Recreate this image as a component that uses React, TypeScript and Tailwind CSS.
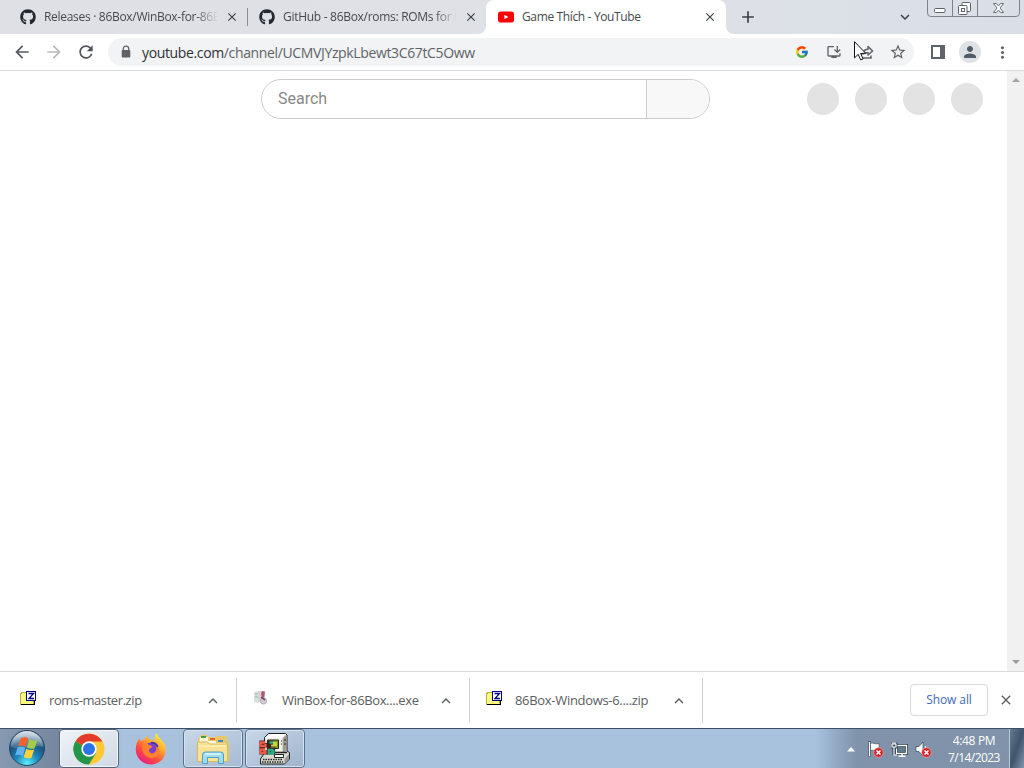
import React from 'react';
import { FaGithub } from 'react-icons/fa';
import { FcGoogle } from 'react-icons/fc';
import {
  MdAdd,
  MdArrowBack,
  MdArrowForward,
  MdClose,
  MdExpandLess,
  MdExpandMore,
  MdInstallDesktop,
  MdMoreVert,
  MdPerson,
  MdRefresh,
  MdStarBorder,
} from 'react-icons/md';

const YouTubeIcon = () => (
  <svg width="16" height="16" viewBox="0 0 16 16">
    <rect y="2.5" width="16" height="11" rx="2.8" fill="#f00" />
    <path d="M6.4 5.700v4.600l4-2.300z" fill="#fff" />
  </svg>
);

const LockIcon = () => (
  <svg width="14" height="14" viewBox="0 0 14 14">
    <path d="M4.300 6V3.800a2.700 2.700 0 015.400 0V6" fill="none" stroke="#5f6368" strokeWidth="1.300" />
    <rect x="2.700" y="5" width="8.600" height="7.500" rx="1" fill="#5f6368" />
  </svg>
);

const ShareIcon = () => (
  <svg width="16" height="16" viewBox="0 0 16 16" fill="none" stroke="#5f6368" strokeWidth="1.5">
    <path d="M3 6.500v7.500h10v-2.500" />
    <path d="M5 10c.5-3 2-4.700 5-4.700V2.600L14.600 7 10 11V8.400C7.800 8.400 6.300 8.800 5 10z" strokeLinejoin="round" />
  </svg>
);

const Cursor = () => (
  <svg className="absolute left-[854px] top-[41px]" width="13" height="20" viewBox="0 0 13 20">
    <path d="M.5.7v16.200l3.700-3.600 2.500 5.600 2.400-1-2.500-5.500h5.200z" fill="#fff" stroke="#111" />
  </svg>
);

const ZipIcon = () => (
  <svg width="17" height="16" viewBox="0 0 17 16" shapeRendering="crispEdges">
    <path d="M.5 4l2-2h4v1h7v11H.5z" fill="#f8f884" stroke="#b4b43c" />
    <path d="M1 14.500h14M14.500 11v4" stroke="#000" />
    <rect x="6.500" y="1.500" width="9" height="9" fill="#fff" stroke="#000080" />
    <path d="M8.500 3.500h5L9 8.500h5" fill="none" stroke="#000080" strokeWidth="1.300" shapeRendering="auto" />
  </svg>
);

const SetupIcon = () => (
  <svg width="16" height="16" viewBox="0 0 16 16">
    <path d="M1 2l5-1v12l-5-1z" fill="#d5e2dd" />
    <path d="M5 1h7v11H5z" fill="#d2d3d8" />
    <path d="M2 4h3M2 7h3" stroke="#9fb5ae" />
    <path d="M9 1l3 1-1 6-2-1-1-3z" fill="#b5546b" />
    <circle cx="10.500" cy="11" r="3.200" fill="#d4c8d3" stroke="#a0a0ab" strokeWidth=".6" />
    <path d="M8 7l4 3" stroke="#6d3546" strokeWidth="1.500" />
  </svg>
);

const StartOrb = () => (
  <svg width="38" height="38" viewBox="0 0 38 38">
    <defs>
      <radialGradient id="orb" cx=".5" cy=".95" r=".85">
        <stop offset="0" stopColor="#5ff0ff" />
        <stop offset=".4" stopColor="#1b86b8" />
        <stop offset=".75" stopColor="#1c4f7c" />
        <stop offset="1" stopColor="#7796b0" />
      </radialGradient>
      <linearGradient id="gloss" x2="0" y2="1">
        <stop stopColor="#fff" stopOpacity=".7" />
        <stop offset="1" stopColor="#fff" stopOpacity=".12" />
      </linearGradient>
    </defs>
    <circle cx="19" cy="19" r="17.500" fill="url(#orb)" stroke="#294560" />
    <path d="M3 18a16 16 0 0132 0c-9-3-22 4-32 0z" fill="url(#gloss)" />
    <g transform="rotate(5 19 19)">
      <path d="M12 9.500c3-1.500 5.500-1.300 7.500 0l-1.900 8.500c-2.300-1.300-5-1.200-7.500 0z" fill="#f0632c" />
      <path d="M20.700 10c2.500 1.300 5.300 1.200 8 0l-2 8.600c-2.500 1.200-5.300 1.200-7.900 0z" fill="#a3cc48" />
      <path d="M9.700 19.200c2.700-1.300 5.400-1.200 7.600 0l-1.900 8.300c-2.400-1.300-5-1.300-7.600 0z" fill="#62b1ee" />
      <path d="M18.400 19.800c2.500 1.300 5.300 1.200 7.900 0l-2 8.400c-2.400 1.200-5.200 1.200-7.800 0z" fill="#ffd13d" />
    </g>
  </svg>
);

const ChromeIcon = () => (
  <svg width="32" height="32" viewBox="0 0 32 32">
    <circle cx="16" cy="16" r="15.500" fill="#fcc934" />
    <path d="M16 16L2.600 8.200A15.500 15.500 0 0016 31.500l7-11.500z" fill="#23964b" />
    <path d="M16 16L2.600 8.200A15.500 15.500 0 0129.400 8.500H16z" fill="#e33b2e" />
    <path d="M2.600 8.200l6.900 11.900L16 23l-3 8.200A15.500 15.500 0 012.600 8.200z" fill="#23964b" />
    <circle cx="16" cy="16" r="7.700" fill="#fff" />
    <circle cx="16" cy="16" r="6" fill="#2c75e8" />
  </svg>
);

const FirefoxIcon = () => (
  <svg width="32" height="32" viewBox="0 0 32 32">
    <defs>
      <linearGradient id="fox" x1=".85" y1=".05" x2=".2" y2="1">
        <stop stopColor="#fff04a" />
        <stop offset=".35" stopColor="#ffa52b" />
        <stop offset=".65" stopColor="#ff4b3e" />
        <stop offset="1" stopColor="#e5148c" />
      </linearGradient>
    </defs>
    <path d="M4.500 5c.2 1.500.8 2.700 1.400 3.400C7 7 8.600 6.400 9.700 6.500c.3-1.600 1.500-3 2.800-3.500.1 2 1.400 3.300 3.800 4 1.500.2 2.500.4 3.500 1-.6-3 .1-5.800 2-7.500 1.200 3.800 4.400 5.200 6.200 8.500 1.300 1 1.800 2.200 2.300 4C32.500 23 25.500 31.500 16 31.500S.5 24 .8 16C1 11.500 2 8 4.500 5z" fill="url(#fox)" />
    <circle cx="16" cy="16.800" r="7.300" fill="#7542cf" />
    <path d="M8 11c3-1 5-.3 6.200 1.300l3.300.7c-.5 2-3 2.200-3.500 3.800-.5 2.500 2.500 4.200 5 3 2.400-1.200 3.300-4.500 1-7 4 1.500 5.300 5.200 3.800 8.200-2 4-7.300 5.300-11.300 3C8 21.500 6 16 8 11z" fill="#ff8130" />
    <path d="M16 10c3-1 6 1 6.500 4" fill="none" stroke="#4e36a5" strokeWidth="2" />
  </svg>
);

const ExplorerIcon = () => (
  <svg width="34" height="32" viewBox="0 0 34 32">
    <path d="M3 5l2-3h6l1 2h8l1-1h10v5l2 2v18H2V5z" fill="#e8c866" />
    <path d="M4 4h8v4h8v2h10v3H3z" fill="#fff8d9" />
    <path d="M5 3h5v2H5z" fill="#3d9d48" />
    <path d="M14 5h5v2h-5z" fill="#e0603a" />
    <path d="M22 7h5v2h-5z" fill="#4386c5" />
    <path d="M1.500 9h10l2 2h18v17.500h-30z" fill="#f8e394" stroke="#d8b85d" />
    <path d="M3 13h27" stroke="#fff7cd" />
    <path d="M6.500 30.500V22q0-3 3-3h15q3 0 3 3v8.500h-5v-6h-11v6z" fill="#9edcf0" stroke="#4e9fca" />
    <path d="M9 21h16" stroke="#e2faff" strokeWidth="1.500" />
  </svg>
);

const EightySixBoxIcon = () => (
  <svg width="32" height="32" viewBox="0 0 32 32">
    <path d="M5.500 4.500l4-4h17l1.500 1.500v16l2.500 1.500v6.500l-5 5h-24v-5l4-6z" fill="#d9d9cf" stroke="#202020" />
    <path d="M6 5L10 1h17l-3.500 4z" fill="#fff" />
    <path d="M23.500 5L27.500 2v16l-4 2z" fill="#9d9d94" />
    <path d="M6 5h17.500v13.500H6z" fill="#efefe6" />
    <path d="M8.500 7h11v8.500h-11z" fill="#86962a" stroke="#222" />
    <path d="M12 9h6v4h-6z" fill="#c8d23c" />
    <path d="M22 8h1M22 11h1M25 7h2M25 11h2" stroke="#222" />
    <path d="M5 19.500h23" stroke="#222" strokeWidth="1.500" />
    <path d="M25.500 26l4.500-5v5l-4.500 4.500z" fill="#999" />
    <path d="M15.500 21.500h9v3h-9z" fill="#fff" stroke="#222" />
    <path d="M4 26.500h20M3 29h21" stroke="#222" strokeWidth="1.500" strokeDasharray="1.500 1" />
    <g fill="none" stroke="#3a2222" strokeWidth="4.200">
      <path d="M6 9.500H2.500v3H6V10M6 16.500H2.500v3H6V17" />
      <path d="M14 9.500h-4v10h4v-3h-3" />
    </g>
    <g fill="none" strokeWidth="2.300" strokeLinejoin="round">
      <path d="M6.500 9.500H1.500v3.500h5V11M6.500 16.500H1.500V20h5v-2H4" stroke="#ee5a45" />
      <path d="M14 9.500h-3.500M14.500 17H9.700v3.500h4.800V18H12" stroke="#27ae88" />
    </g>
  </svg>
);

const ErrorBadge = () => (
  <g>
    <circle cx="11.500" cy="11.500" r="4.800" fill="#d2232c" stroke="#f2aaa6" strokeWidth=".7" />
    <path d="M9.500 9.500l4 4m0-4l-4 4" stroke="#fff" strokeWidth="1.500" />
  </g>
);

const FlagIcon = () => (
  <svg width="17" height="17" viewBox="0 0 17 17">
    <path d="M2.500 1v15" stroke="#fff" strokeWidth="1.800" />
    <path d="M1.500.5h2v15h-2z" fill="none" stroke="#273849" strokeWidth=".6" />
    <path d="M3.500 2.500c3-1.500 4 1.500 8.500 0v7c-4 1.500-5-1.200-8.500 0z" fill="#fff" stroke="#34465a" strokeWidth=".6" />
    <ErrorBadge />
  </svg>
);

const NetworkIcon = () => (
  <svg width="17" height="17" viewBox="0 0 17 17" fill="none">
    <path d="M5.500 4.500h10v8h-10z" fill="#63798e" stroke="#26384a" strokeWidth="3" />
    <path d="M5.500 4.500h10v8h-10zM7.500 15.200h7M11 12v3" stroke="#fff" strokeWidth="1.400" />
    <path d="M1 2v4h4V2M3 6v8M2 1v2m2-2v2" stroke="#26384a" strokeWidth="3" />
    <path d="M1 3v3h4V3zM3 6v8h3M2 1v2m2-2v2" stroke="#fff" strokeWidth="1.200" />
  </svg>
);

const VolumeIcon = () => (
  <svg width="17" height="17" viewBox="0 0 17 17">
    <path d="M1 5.500h3l4-4.500v14l-4-4.500H1z" fill="#fff" stroke="#34465a" strokeWidth=".7" />
    <path d="M10 5q2 2 1 5" fill="none" stroke="#fff" />
    <ErrorBadge />
  </svg>
);

const WindowButtons = () => (
  <div className="absolute right-[3px] top-0">
    <svg width="94" height="18" viewBox="0 0 94 18" fill="none" stroke="#7d838c">
      <path d="M.5 0v13q0 3.500 3.500 3.500h85q3.500 0 3.500-3.500V0M25.500 0v16M50.500 0v16" />
      <rect x="7.500" y="8.500" width="10.500" height="4" rx="1" fill="#fff" stroke="#5c616b" />
      <g fill="#fff" stroke="#5c616b">
        <rect x="35" y="2.500" width="8.500" height="9" rx="1" />
        <rect x="31.500" y="5.500" width="8.500" height="9" rx="1" />
        <rect x="34.500" y="8.500" width="3" height="3" />
      </g>
      <path d="M66.500 3.500h3l2 2.500 2-2.500h3l-3.500 4.500 3.500 4.500h-3l-2-2.500-2 2.500h-3L70 8z" fill="#fff" stroke="#5c616b" strokeWidth=".9" />
    </svg>
  </div>
);

const TabClose = () => <MdClose className="shrink-0 text-[#3c4043]" size={14} />;

const downloads = [
  { name: 'roms-master.zip', icon: <ZipIcon />, width: 'w-[237px]', text: 'tracking-[-0.42px]' },
  { name: 'WinBox-for-86Box....exe', icon: <SetupIcon />, width: 'w-[233px]', text: 'tracking-[-0.37px]' },
  { name: '86Box-Windows-6....zip', icon: <ZipIcon />, width: 'w-[233px]', text: 'tracking-[-0.31px]' },
];

const TabStrip = () => (
  <div className="relative flex h-[34px] items-stretch bg-linear-to-r from-[#dfe0e6] via-[#dee1e6] to-[#dadfe7] text-[12px] text-[#45494d]">
    <div className="flex w-[247px] items-center pl-5 pr-2">
      <FaGithub className="shrink-0 text-[#24292f]" size={16} />
      <span className="ml-2 w-[174px] overflow-hidden whitespace-nowrap tracking-[-0.3px] [mask-image:linear-gradient(to_right,black_87%,transparent)]">
        Releases · 86Box/WinBox-for-86B
      </span>
      <span className="ml-[7px]"><TabClose /></span>
    </div>
    <div className="my-auto h-[18px] w-px bg-[#8b8f95]" />
    <div className="flex w-[238px] items-center pl-[11px]">
      <FaGithub className="shrink-0 text-[#24292f]" size={16} />
      <span className="ml-2 w-[174px] overflow-hidden whitespace-nowrap tracking-[-0.29px] [mask-image:linear-gradient(to_right,black_87%,transparent)]">
        GitHub - 86Box/roms: ROMs for t
      </span>
      <span className="ml-[7px]"><TabClose /></span>
    </div>
    <div className="relative flex w-[240px] items-center rounded-t-lg bg-white pl-3">
      <svg className="absolute -left-2 bottom-0" width="8" height="8"><path d="M8 0v8H0a8 8 0 008-8z" fill="#fff" /></svg>
      <svg className="absolute -right-2 bottom-0" width="8" height="8"><path d="M0 0v8h8a8 8 0 01-8-8z" fill="#fff" /></svg>
      <YouTubeIcon />
      <span className="ml-2 w-[174px] whitespace-nowrap tracking-[-0.36px]">Game Thích - YouTube</span>
      <span className="ml-[7px]"><TabClose /></span>
    </div>
    <MdAdd className="my-auto ml-3 text-[#3c4043]" size={20} />
    <MdExpandMore className="my-auto ml-[138px] text-[#3c4043]" size={18} />
    <WindowButtons />
  </div>
);

const Toolbar = () => (
  <div className="flex h-[37px] items-center border-b border-[#d9dadd] bg-white text-[#5f6368]">
    <MdArrowBack className="ml-3 text-[#55595e]" size={20} />
    <MdArrowForward className="ml-3 text-[#b8babd]" size={20} />
    <MdRefresh className="ml-3 text-[#4f5358]" size={20} />
    <div className="ml-3 flex h-7 w-[806px] items-center rounded-full bg-[#f1f3f4] pl-[11px] pr-2">
      <LockIcon />
      <span className="ml-[9px] whitespace-nowrap text-[14px] tracking-[-0.36px]">
        <span className="text-[#303134]">youtube.com</span>/channel/UCMVJYzpkLbewt3C67tC5Oww
      </span>
      <div className="ml-auto flex items-center gap-4">
        <FcGoogle size={14} className="mr-px" />
        <MdInstallDesktop size={16} />
        <ShareIcon />
        <MdStarBorder size={18} className="-mx-px" />
      </div>
    </div>
    <svg className="ml-[17px]" width="14" height="14"><path d="M1 1h12v12H1z" fill="none" stroke="#5f6368" strokeWidth="2" /><path d="M9 0h5v14H9z" fill="#5f6368" /></svg>
    <div className="ml-[14px] flex size-[22px] items-center justify-center rounded-full bg-[#dee1e6]">
      <MdPerson size={18} className="text-[#4f5b66]" />
    </div>
    <MdMoreVert className="ml-3" size={19} />
  </div>
);

const Page = () => (
  <div className="flex h-[600px] bg-white">
    <div className="flex flex-1 items-start pt-2">
      <div className="ml-[261px] flex h-10 w-[449px] overflow-hidden rounded-full border border-[#ccc]">
        <div className="flex w-[385px] items-center border-r border-[#ccc] pl-4 font-['Roboto',sans-serif] text-base text-[#888]">Search</div>
        <div className="flex-1 bg-[#f8f8f8]" />
      </div>
      <div className="ml-[97px] mt-1 flex gap-4">
        {[0, 1, 2, 3].map((i) => (
          <div key={i} className="size-8 rounded-full bg-[#e3e3e3]" />
        ))}
      </div>
    </div>
    <div className="flex w-[17px] flex-col items-center justify-between bg-[#f1f1f1] py-[7px]">
      <svg width="8" height="4"><path d="M0 4l4-4 4 4z" fill="#a3a3a3" /></svg>
      <svg width="8" height="4"><path d="M0 0l4 4 4-4z" fill="#9a9a9a" /></svg>
    </div>
  </div>
);

const DownloadShelf = () => (
  <div className="flex h-[57px] items-center border-t border-[#d9dadd] bg-white text-[#5a5d61]">
    {downloads.map((item, i) => (
      <div key={item.name} className={`flex h-[45px] items-center border-r border-[#cfd0d3] ${i === 0 ? 'pl-5' : 'pl-4'} ${item.width}`}>
        <span className="-mt-1 flex w-[29px] shrink-0 items-center">{item.icon}</span>
        <span className={`whitespace-nowrap pt-0.5 text-[13px] ${item.text}`}>{item.name}</span>
        <MdExpandLess className="ml-auto mr-[14px] mt-px shrink-0" size={18} />
      </div>
    ))}
    <div className="ml-auto flex h-8 w-[78px] items-center justify-center rounded border border-[#d5d8dc] text-[12px] font-medium tracking-[-0.1px] text-[#4069b5]">Show all</div>
    <MdClose className="ml-[10px] mr-[10px]" size={16} />
  </div>
);

const Taskbar = () => (
  <div className="flex h-10 border-t border-[#3d4f66] bg-linear-to-r from-[#8093ab] from-5% via-[#a8c2de] via-12% to-[#a8c2de]">
    <div className="flex w-[59px] justify-center bg-linear-to-r from-[#8699b0] to-[#74879f] pr-[5px]"><StartOrb /></div>
    <div className="flex w-[60px] items-center justify-center rounded-sm border border-[#53647a] bg-linear-to-br from-[#f0f3f7] to-[#cfd9e5] shadow-[inset_0_0_0_1px_#f5f8fb]"><ChromeIcon /></div>
    <div className="flex w-[64px] items-center justify-center"><FirefoxIcon /></div>
    <div className="flex w-[60px] items-center justify-center rounded-sm border border-[#5e7188] bg-linear-to-br from-[#c9d8e8] to-[#a5bad2] shadow-[inset_0_0_0_1px_#d5e3f1]"><ExplorerIcon /></div>
    <div className="ml-[2px] flex w-[60px] items-center justify-center rounded-sm border border-[#5e7188] bg-linear-to-br from-[#c9d8e8] to-[#9eb4cd] shadow-[inset_0_0_0_1px_#d5e3f1]"><EightySixBoxIcon /></div>
    <div className="ml-auto flex w-[209px] items-center bg-linear-to-r from-[#a8c2de] to-[#8093aa] to-20%">
      <svg className="ml-8 mt-0.5 shrink-0" width="8" height="5"><path d="M0 4.500L4 0l4 4.500z" fill="#fff" /></svg>
      <div className="ml-3 mt-0.5 flex shrink-0 gap-[7px]">
        <FlagIcon />
        <NetworkIcon />
        <VolumeIcon />
      </div>
      <div className="ml-[10px] flex w-[64px] shrink-0 flex-col items-center text-[12px] leading-[17px] text-white">
        <span className="whitespace-nowrap tracking-[-0.35px]">4:48 PM</span>
        <span className="whitespace-nowrap tracking-[-0.55px]">7/14/2023</span>
      </div>
      <div className="ml-auto h-full w-[15px] shrink-0 border-l border-[#bccbdc] bg-linear-to-br from-[#667a92] via-[#40546b] to-[#8296ad]" />
    </div>
  </div>
);

export default function App() {
  return (
    <div className="relative flex h-[768px] w-[1024px] flex-col overflow-hidden bg-white font-['Open_Sans','Noto_Sans',sans-serif]">
      <TabStrip />
      <Toolbar />
      <Page />
      <DownloadShelf />
      <Taskbar />
      <Cursor />
    </div>
  );
}
